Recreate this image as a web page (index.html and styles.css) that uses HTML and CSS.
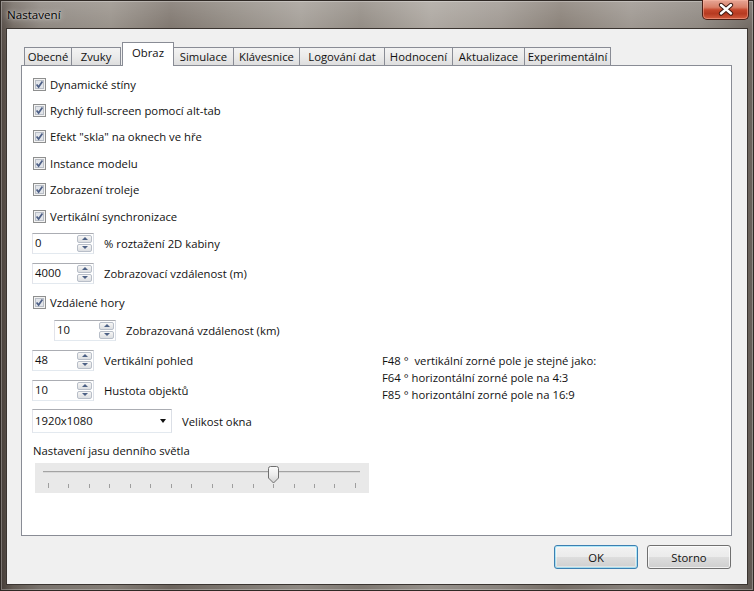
FILE: index.html
```html
<!DOCTYPE html>
<html lang="cs">
<head>
<meta charset="utf-8">
<title>Nastavení</title>
<link rel="stylesheet" href="styles.css">
</head>
<body>
<div class="window">
  <div class="titlebar">
    <span class="title">Nastavení</span>
    <div class="close-btn">
      <svg width="45" height="19" viewBox="0 0 45 19">
        <path d="M18 5 L28 13.5 M28 5 L18 13.5" stroke="#3d1810" stroke-width="4.4" stroke-linecap="round"/>
        <path d="M18 5 L28 13.5 M28 5 L18 13.5" stroke="#ffffff" stroke-width="2.4" stroke-linecap="round"/>
      </svg>
    </div>
  </div>
  <div class="client">
    <div class="tabs">
      <div class="tab">Obecné</div>
      <div class="tab">Zvuky</div>
      <div class="tab active">Obraz</div>
      <div class="tab">Simulace</div>
      <div class="tab">Klávesnice</div>
      <div class="tab">Logování dat</div>
      <div class="tab">Hodnocení</div>
      <div class="tab">Aktualizace</div>
      <div class="tab">Experimentální</div>
    </div>
    <div class="panel">
      <div class="row row-cb"><svg class="check" width="13" height="13" viewBox="0 0 13 13"><rect x="0.5" y="0.5" width="12" height="12" fill="#f3f3f3" stroke="#8e8f8f"/><rect x="2.5" y="2.5" width="8" height="8" fill="#e2e5ea" stroke="#b9bec6"/><path d="M3.6 6.4 L5.6 9 L9.4 3.6" stroke="#4d5f86" stroke-width="1.7" fill="none"/></svg><span>Dynamické stíny</span></div>
      <div class="row row-cb"><svg class="check" width="13" height="13" viewBox="0 0 13 13"><rect x="0.5" y="0.5" width="12" height="12" fill="#f3f3f3" stroke="#8e8f8f"/><rect x="2.5" y="2.5" width="8" height="8" fill="#e2e5ea" stroke="#b9bec6"/><path d="M3.6 6.4 L5.6 9 L9.4 3.6" stroke="#4d5f86" stroke-width="1.7" fill="none"/></svg><span>Rychlý full-screen pomocí alt-tab</span></div>
      <div class="row row-cb"><svg class="check" width="13" height="13" viewBox="0 0 13 13"><rect x="0.5" y="0.5" width="12" height="12" fill="#f3f3f3" stroke="#8e8f8f"/><rect x="2.5" y="2.5" width="8" height="8" fill="#e2e5ea" stroke="#b9bec6"/><path d="M3.6 6.4 L5.6 9 L9.4 3.6" stroke="#4d5f86" stroke-width="1.7" fill="none"/></svg><span>Efekt "skla" na oknech ve hře</span></div>
      <div class="row row-cb"><svg class="check" width="13" height="13" viewBox="0 0 13 13"><rect x="0.5" y="0.5" width="12" height="12" fill="#f3f3f3" stroke="#8e8f8f"/><rect x="2.5" y="2.5" width="8" height="8" fill="#e2e5ea" stroke="#b9bec6"/><path d="M3.6 6.4 L5.6 9 L9.4 3.6" stroke="#4d5f86" stroke-width="1.7" fill="none"/></svg><span>Instance modelu</span></div>
      <div class="row row-cb"><svg class="check" width="13" height="13" viewBox="0 0 13 13"><rect x="0.5" y="0.5" width="12" height="12" fill="#f3f3f3" stroke="#8e8f8f"/><rect x="2.5" y="2.5" width="8" height="8" fill="#e2e5ea" stroke="#b9bec6"/><path d="M3.6 6.4 L5.6 9 L9.4 3.6" stroke="#4d5f86" stroke-width="1.7" fill="none"/></svg><span>Zobrazení troleje</span></div>
      <div class="row row-cb"><svg class="check" width="13" height="13" viewBox="0 0 13 13"><rect x="0.5" y="0.5" width="12" height="12" fill="#f3f3f3" stroke="#8e8f8f"/><rect x="2.5" y="2.5" width="8" height="8" fill="#e2e5ea" stroke="#b9bec6"/><path d="M3.6 6.4 L5.6 9 L9.4 3.6" stroke="#4d5f86" stroke-width="1.7" fill="none"/></svg><span>Vertikální synchronizace</span></div>

      <div class="row row-s1">
        <div class="spin"><span class="spin-val">0</span><span class="spin-btns"><span class="spin-b up"></span><span class="spin-b down"></span></span></div>
        <span class="lbl">% roztažení 2D kabiny</span>
      </div>
      <div class="row row-s2">
        <div class="spin"><span class="spin-val">4000</span><span class="spin-btns"><span class="spin-b up"></span><span class="spin-b down"></span></span></div>
        <span class="lbl">Zobrazovací vzdálenost (m)</span>
      </div>
      <div class="row row-cb2"><svg class="check" width="13" height="13" viewBox="0 0 13 13"><rect x="0.5" y="0.5" width="12" height="12" fill="#f3f3f3" stroke="#8e8f8f"/><rect x="2.5" y="2.5" width="8" height="8" fill="#e2e5ea" stroke="#b9bec6"/><path d="M3.6 6.4 L5.6 9 L9.4 3.6" stroke="#4d5f86" stroke-width="1.7" fill="none"/></svg><span>Vzdálené hory</span></div>
      <div class="row row-s3 indent">
        <div class="spin"><span class="spin-val">10</span><span class="spin-btns"><span class="spin-b up"></span><span class="spin-b down"></span></span></div>
        <span class="lbl">Zobrazovaná vzdálenost (km)</span>
      </div>

      <div class="split">
        <div class="left-col">
          <div class="row row-s4">
            <div class="spin"><span class="spin-val">48</span><span class="spin-btns"><span class="spin-b up"></span><span class="spin-b down"></span></span></div>
            <span class="lbl">Vertikální pohled</span>
          </div>
          <div class="row row-s4">
            <div class="spin"><span class="spin-val">10</span><span class="spin-btns"><span class="spin-b up"></span><span class="spin-b down"></span></span></div>
            <span class="lbl">Hustota objektů</span>
          </div>
          <div class="row row-combo">
            <div class="combo"><span>1920x1080</span><span class="combo-arrow"></span></div>
            <span class="lbl">Velikost okna</span>
          </div>
          <div class="row row-label"><span>Nastavení jasu denního světla</span></div>
          <div class="slider">
            <div class="track"></div>
            <div class="ticks">
              <i class="end"></i><i></i><i></i><i></i><i></i><i></i><i></i><i></i><i></i><i></i><i></i><i></i><i></i><i></i><i></i><i class="end"></i>
            </div>
            <svg class="thumb" width="11" height="18" viewBox="0 0 11 18">
              <defs><linearGradient id="tg" x1="0" y1="0" x2="0" y2="1"><stop offset="0" stop-color="#fbfbfb"/><stop offset="0.5" stop-color="#ececec"/><stop offset="1" stop-color="#d2d2d2"/></linearGradient></defs>
              <path d="M0.5 2.5 Q0.5 0.5 2.5 0.5 H8.5 Q10.5 0.5 10.5 2.5 V12 L5.5 17 L0.5 12 Z" fill="url(#tg)" stroke="#6f6f6f"/>
            </svg>
          </div>
        </div>
        <div class="right-col">
          <div>F48 °&nbsp; vertikální zorné pole je stejné jako:</div>
          <div>F64 ° horizontální zorné pole na 4:3</div>
          <div>F85 ° horizontální zorné pole na 16:9</div>
        </div>
      </div>
    </div>
    <div class="buttons">
      <div class="btn default">OK</div>
      <div class="btn">Storno</div>
    </div>
  </div>
</div>
</body>
</html>
```

FILE: styles.css
```css
* { box-sizing: border-box; }
html, body { margin: 0; padding: 0; }
body {
  width: 754px;
  height: 591px;
  overflow: hidden;
  background: #ffffff;
  font-family: "Open Sans", "Noto Sans", sans-serif;
  font-size: 11.3px;
  color: #111;
}

.window {
  width: 754px;
  height: 591px;
  display: flex;
  flex-direction: column;
  border: 1px solid #2f2925;
  box-shadow: inset 0 0 0 1px rgba(255, 255, 255, 0.28);
  background:
    linear-gradient(180deg, rgba(255,255,255,0.18) 0px, rgba(255,255,255,0.04) 28px, rgba(0,0,0,0) 60px, rgba(0,0,0,0.12) 591px),
    linear-gradient(90deg, #4f4640 0px, #6f665e 12px, #8a837c 40px, #958e86 110px, #7b726a 170px, #8e877f 230px, #a29c95 300px, #8f8880 360px, #aaa49d 430px, #9c958e 500px, #857c73 560px, #9a938c 630px, #8a837c 700px, #6a625b 754px);
}

.titlebar {
  height: 27px;
  display: flex;
  align-items: flex-start;
  flex: none;
}
.title {
  padding: 6px 0 0 6px;
  font-size: 11.6px;
  color: #000;
  text-shadow: 0 0 6px rgba(255,255,255,0.8), 0 0 2px rgba(255,255,255,0.6);
}
.close-btn {
  width: 47px;
  height: 20px;
  margin: -1px 4px 0 auto;
  border: 1px solid #4b1f16;
  border-top: none;
  border-radius: 0 0 5px 5px;
  background: linear-gradient(180deg, #e6a696 0%, #d98068 38%, #c5472c 52%, #b63a21 72%, #d35d3f 100%);
  box-shadow: inset 0 0 0 1px rgba(255, 190, 170, 0.45);
  display: flex;
  align-items: center;
  justify-content: center;
}
.close-btn svg { display: block; }

.client {
  flex: none;
  height: 557px;
  margin: 0 5px 5px 5px;
  border: 1px solid #3a3430;
  background: #f0f0f0;
  padding: 13px 15px 0 14px;
}

.tabs {
  height: 23px;
  display: flex;
  align-items: flex-end;
  padding-left: 3px;
}
.tab {
  height: 18px;
  border: 1px solid #898c95;
  border-bottom: none;
  background: linear-gradient(180deg, #f3f3f3 0%, #ebebeb 50%, #dedede 100%);
  display: flex;
  align-items: center;
  justify-content: center;
  padding-bottom: 1px;
  margin-left: -1px;
  white-space: nowrap;
}
.tab:nth-child(1) { width: 48px; margin-left: 0; }
.tab:nth-child(2) { width: 50px; }
.tab:nth-child(3) { width: 52px; }
.tab:nth-child(4) { width: 61px; }
.tab:nth-child(5) { width: 67px; }
.tab:nth-child(6) { width: 86px; }
.tab:nth-child(7) { width: 69px; }
.tab:nth-child(8) { width: 73px; }
.tab:nth-child(9) { width: 87px; }
.tab.active {
  height: 24px;
  margin-left: 1px;
  margin-bottom: -1px;
  background: #fff;
  position: relative;
  z-index: 2;
  align-items: flex-start;
  padding-top: 2px;
}

.panel {
  height: 471px;
  border: 1px solid #898c95;
  background: #fff;
  padding: 5px 0 0 11px;
}

.row {
  display: flex;
  align-items: center;
  white-space: nowrap;
}
.row-cb { height: 26.4px; }
.check { display: block; margin-right: 4px; flex: none; }
.row-s1 { height: 28px; }
.row-s2 { height: 32px; }
.row-cb2 { height: 26px; }
.row-s3 { height: 30px; }
.row-s4 { height: 30px; }
.row-combo { height: 32px; }
.row-label { height: 26px; }
.indent { padding-left: 22px; }

.spin {
  width: 62px;
  height: 21px;
  margin-left: -1px;
  border: 1px solid #abadb3;
  border-color: #abadb3 #dbdfe6 #e3e9ef #e2e3ea;
  background: #fff;
  display: flex;
  align-items: center;
  justify-content: space-between;
  padding: 1px 1px 1px 2px;
  flex: none;
}
.spin-val { line-height: 1; padding-bottom: 2px; }
.spin-btns {
  display: flex;
  flex-direction: column;
  gap: 1px;
  width: 15px;
  height: 17px;
}
.spin-b {
  flex: 1;
  border: 1px solid #b8bec8;
  border-radius: 2px;
  background: linear-gradient(180deg, #f7f7f7 0%, #eaeaea 50%, #dcdfe3 100%);
  display: flex;
  align-items: center;
  justify-content: center;
}
.spin-b::after {
  content: "";
  width: 0;
  height: 0;
  border-left: 3px solid transparent;
  border-right: 3px solid transparent;
}
.spin-b.up::after { border-bottom: 3px solid #4d6185; }
.spin-b.down::after { border-top: 3px solid #4d6185; }

.lbl { margin-left: 10px; }

.split {
  display: flex;
}
.left-col {
  width: 349px;
  flex: none;
}
.right-col {
  padding-top: 7px;
  line-height: 17px;
  white-space: nowrap;
}

.combo {
  width: 140px;
  height: 24px;
  margin-left: -1px;
  border: 1px solid #abadb3;
  border-color: #abadb3 #dbdfe6 #e3e9ef #e2e3ea;
  background: #fff;
  display: flex;
  align-items: center;
  justify-content: space-between;
  padding: 0 4px 2px 2px;
  flex: none;
}
.combo-arrow {
  width: 0;
  height: 0;
  border-left: 3.5px solid transparent;
  border-right: 3.5px solid transparent;
  border-top: 4px solid #111;
  margin: 2px 1px 0 0;
}
.row-combo .lbl { margin-left: 10px; }

.slider {
  width: 334px;
  height: 30px;
  margin-left: 2px;
  background: #e9e9e9;
  position: relative;
  padding: 8px 8px 0 8px;
}
.track {
  height: 2px;
  width: 317px;
  border-top: 1px solid #a3a3a3;
  background: #d9d9d9;
}
.ticks {
  margin: 10px 0 0 4.7px;
  width: 308.3px;
  height: 6px;
  display: flex;
  justify-content: space-between;
  align-items: flex-start;
}
.ticks i {
  display: block;
  width: 1px;
  height: 4px;
  margin-top: 1px;
  background: #9e9e9e;
}
.ticks i.end { height: 5px; margin-top: 0; }
.thumb {
  position: absolute;
  left: 233px;
  top: 3px;
}

.buttons {
  margin-top: 9px;
  display: flex;
  justify-content: flex-end;
  gap: 9px;
  padding-right: 1px;
}
.btn {
  width: 84px;
  height: 24px;
  border: 1px solid #707070;
  border-radius: 3px;
  background: linear-gradient(180deg, #f2f2f2 0%, #ebebeb 50%, #dddddd 52%, #cfcfcf 100%);
  box-shadow: inset 0 0 0 1px rgba(255,255,255,0.7);
  display: flex;
  align-items: center;
  justify-content: center;
}
.btn.default {
  border-color: #3c7fb1;
  box-shadow: inset 0 0 0 1px #48d3fc66, inset 0 0 0 2px rgba(255,255,255,0.4);
}
```
